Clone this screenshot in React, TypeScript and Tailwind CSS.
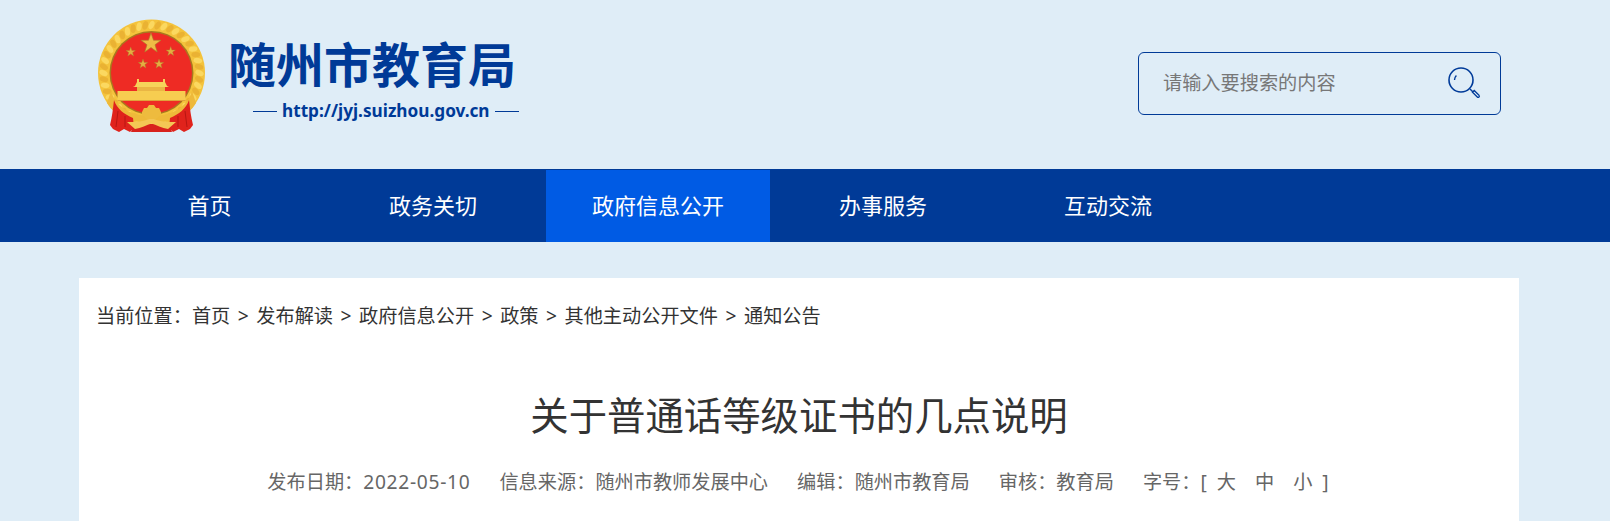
const navItems = ["首页", "政务关切", "政府信息公开", "办事服务", "互动交流"];
const crumbs = ["首页", "发布解读", "政府信息公开", "政策", "其他主动公开文件", "通知公告"];
const colon = "\uFF1A";

function Emblem() {
  const leaves = Array.from({ length: 48 }, (_, i) => i * 7.5);
  return (
    <svg width="110" height="114" viewBox="0 0 110 114" className="shrink-0 blur-[0.35px]" aria-hidden="true">
      <defs>
        <polygon id="star" points="0,-10 2.4,-3.1 9.5,-3.1 3.8,1.2 5.9,8.1 0,3.8 -5.9,8.1 -3.8,1.2 -9.5,-3.1 -2.4,-3.1" />
      </defs>
      {/* wheat ring */}
      <circle cx="55.5" cy="54" r="53.5" fill="#f4c33c" />
      {leaves.map((r) => (
        <ellipse
          key={r}
          cx="55.5"
          cy="6"
          rx="2.6"
          ry="4.4"
          fill={r % 15 === 0 ? "#fbd860" : "#eab233"}
          transform={`rotate(${r} 55.5 54) rotate(24 55.5 6)`}
        />
      ))}
      <circle cx="55.5" cy="54" r="42" fill="#a8791f" />
      <circle cx="55.5" cy="54" r="40.5" fill="#ee2b24" />

      <use href="#star" transform="translate(55 24.5) scale(1.05)" fill="#eebc46" stroke="#a9802c" strokeWidth="0.6" />
      <use href="#star" transform="translate(34.7 33) scale(0.5)" fill="#e5ae42" stroke="#a9802c" strokeWidth="0.8" />
      <use href="#star" transform="translate(74.7 32.5) scale(0.5)" fill="#e5ae42" stroke="#a9802c" strokeWidth="0.8" />
      <use href="#star" transform="translate(47 45) scale(0.5)" fill="#e5ae42" stroke="#a9802c" strokeWidth="0.8" />
      <use href="#star" transform="translate(63 45) scale(0.5)" fill="#e5ae42" stroke="#a9802c" strokeWidth="0.8" />

      {/* gate */}
      <path d="M41 60 L43 60 L43 63 L67 63 L67 60 L69 60 L69 63 L71 67 L73 68 L37 68 L39 67 L41 63 Z" fill="#f6d35a" />
      <rect x="41" y="68" width="28" height="4" fill="#eab644" />
      <path d="M21.5 72 L89.5 72 L89.5 81.5 L21.5 81.5 Z" fill="#f7cd50" />
      <rect x="21.5" y="81" width="68" height="1" fill="#dfa23a" />

      {/* lower ring arc */}
      <path d="M15 72 C20 90 38 97 55.5 97 C73 97 91 90 96 72 L100 84 C92 98 74 104 55.5 104 C37 104 19 98 11 84 Z" fill="#eeb93a" />

      {/* drapes */}
      <path d="M18 81 C21 90 28 95 37 99 L38 109 L34 113 L28 110 L23 113 L17 110 L14 106 C16 98 17 90 18 81 Z" fill="#e0231c" />
      <path d="M93 81 C90 90 83 95 74 99 L73 109 L77 113 L83 110 L88 113 L94 110 L97 106 C95 98 94 90 93 81 Z" fill="#e0231c" />
      <path d="M22 92 L20 108 M29 97 L29 108 M89 92 L91 108 M82 97 L82 108" stroke="#b81612" strokeWidth="1" />
      <path d="M38 105 L73 105 L76 113 L35 113 Z" fill="#d8221d" />
      <path d="M31 103 C39 103 48 103 55.5 99 C63 103 72 103 80 103 L72 110 C66 109 60 106 55.5 104.5 C51 106 45 109 39 110 Z" fill="#f4c655" />
      <path d="M46 93 L48 89 L51 89 L53 86 L58 86 L60 89 L63 89 L65 93 L65 96 L60 100 L51 100 L46 96 Z" fill="#eebb3e" />
    </svg>
  );
}

function SearchIcon() {
  return (
    <svg width="34" height="34" viewBox="0 0 34 34" fill="none" aria-hidden="true">
      <circle cx="14" cy="13" r="12" stroke="#003b99" strokeWidth="1.6" />
      <path d="M7.5 13 C7.5 11 8.2 9.6 9.4 8.4" stroke="#003b99" strokeWidth="1.4" />
      <path d="M23 22 L26 25" stroke="#003b99" strokeWidth="1.4" />
      <path d="M25.5 25.2 L27.2 23.5 L32 28.3 C32.6 29 32.4 29.6 32 30 C31.4 30.6 30.8 30.6 30.3 30 Z" stroke="#003b99" strokeWidth="1.3" />
    </svg>
  );
}

export default function App() {
  return (
    <div className="h-screen overflow-hidden bg-[#dfedf7] font-['Noto_Sans','Noto_Sans_CJK_SC',sans-serif]">
      <header className="flex h-[169px] items-start justify-between pl-[96px] pr-[109px]">
        <div className="flex pt-[19px]">
          <Emblem />
          <div className="ml-[22px] pt-[16px]">
            <div className="text-[48px] leading-[60px] font-bold text-[#003a97]">随州市教育局</div>
            <div className="mt-[5px] flex items-center gap-[5px] pl-[25px] text-[17.2px] leading-[22px] font-bold text-[#003a97]">
              <span className="h-px w-[24px] bg-[#003a97]" />
              <span>http://jyj.suizhou.gov.cn</span>
              <span className="h-px w-[24px] bg-[#003a97]" />
            </div>
          </div>
        </div>
        <div className="mt-[52px] flex h-[63px] w-[363px] items-center justify-between rounded-[6px] border border-[#003a97] pr-[19px] pl-[24px]">
          <span className="text-[19.2px] text-[#777]">请输入要搜索的内容</span>
          <SearchIcon />
        </div>
      </header>

      <nav className="flex h-[73px] gap-px bg-[#003a97] pl-[96px]">
        {navItems.map((item, i) => (
          <a
            key={item}
            className={`mt-px flex w-[224px] items-center justify-center pb-[2px] text-[22px] text-white first:pl-[3px] ${i === 2 ? "bg-[#005be4]" : ""}`}
          >
            {item}
          </a>
        ))}
      </nav>

      <main className="mt-[36px] ml-[79px] h-[300px] w-[1440px] bg-white px-[17px]">
        <div className="flex items-center pt-[23px] text-[19.2px] leading-[30px] text-[#333]">
          <span>当前位置{colon}</span>
          {crumbs.map((c, i) => (
            <span key={c}>
              {i > 0 && <span className="mx-[7.5px]">&gt;</span>}
              {c}
            </span>
          ))}
        </div>
        <h1 className="mt-[57px] text-center text-[38.4px] leading-[54px] text-[#333]">关于普通话等级证书的几点说明</h1>
        <div className="mt-[25px] flex justify-center gap-[29px] pr-[2px] text-[19.2px] leading-[30px] text-[#666]">
          <span>
            发布日期{colon}<span className="tracking-[0.7px]">2022-05-10</span>
          </span>
          <span>信息来源{colon}随州市教师发展中心</span>
          <span>编辑{colon}随州市教育局</span>
          <span>审核{colon}教育局</span>
          <span className="flex">
            <span>字号{colon}</span>
            <span className="mr-[10px]">[</span>
            <span>大</span>
            <span className="mx-[19px]">中</span>
            <span>小</span>
            <span className="ml-[10px]">]</span>
          </span>
        </div>
      </main>
    </div>
  );
}
